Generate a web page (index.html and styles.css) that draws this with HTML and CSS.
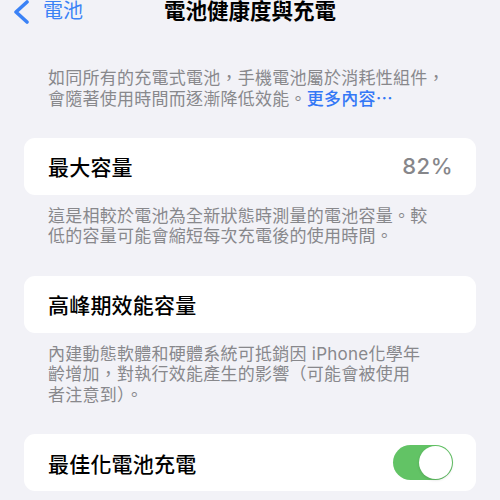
FILE: index.html
```html
<!DOCTYPE html>
<html>
	<head>
		<meta charset="utf-8">
		<title>電池健康度與充電</title>
		<link rel="stylesheet" href="styles.css">
	</head>
	<body>
		<div class="nav">
			<a class="back" href="#">
				<svg width="18" height="24" viewBox="0 0 18 24">
					<polyline points="14,2 3,12 14,22" fill="none" stroke="#3b82f6" stroke-width="3.6" stroke-linecap="round" stroke-linejoin="round"/>
				</svg>
				<span>電池</span>
			</a>
			<h1 class="title">電池健康度與充電</h1>
		</div>

		<p class="note intro">如同所有的充電式電池，手機電池屬於消耗性組件，<br>會隨著使用時間而逐漸降低效能。<a class="more" href="#">更多內容⋯</a></p>

		<div class="group">
			<div class="row">
				<span class="label">最大容量</span>
				<span class="value">82%</span>
			</div>
		</div>
		<p class="note">這是相較於電池為全新狀態時測量的電池容量。較<br>低的容量可能會縮短每次充電後的使用時間。</p>

		<div class="group">
			<div class="row">
				<span class="label">高峰期效能容量</span>
			</div>
		</div>
		<p class="note">內建動態軟體和硬體系統可抵銷因 iPhone化學年<br>齡增加，對執行效能產生的影響（可能會被使用<br>者注意到）。</p>

		<div class="group">
			<div class="row">
				<span class="label">最佳化電池充電</span>
				<span class="switch on"><i></i></span>
			</div>
		</div>
	</body>
</html>
```

FILE: styles.css
```css
*{
	margin: 0;
	padding: 0;
	box-sizing: border-box;
}
body{
	background-color: #f2f2f7;
	font-family: Inter, "Noto Sans CJK TC", sans-serif;
	color: #000;
	overflow: hidden;
}
a{
	text-decoration: none;
}

/* 顶部导航 */
.nav{
	position: relative;
	height: 23px;
	display: flex;
	align-items: flex-start;
	justify-content: center;
}
.back{
	position: absolute;
	left: 13px;
	top: 0;
	display: flex;
	align-items: center;
	gap: 12px;
	color: #3b82f6;
	font-size: 20px;
	line-height: 22px;
}
.back span{
	margin-top: -2px;
}
.title{
	font-size: 21.5px;
	font-weight: 700;
	line-height: 21px;
	padding-top: 1px;
}

/* 说明文字 */
.note{
	padding: 0 24px 0 48px;
	margin: 11px 0 29px;
	font-size: 17px;
	letter-spacing: 0.25px;
	line-height: 20.5px;
	color: #88888c;
}
.note.intro{
	margin-top: 45px;
	margin-bottom: 28.5px;
}
.more{
	color: #3478f6;
	font-weight: 500;
}

/* 分组卡片 */
.group{
	margin: 0 24px;
	background-color: #fff;
	border-radius: 11px;
}
.row{
	height: 57px;
	padding: 0 23px 0 24px;
	display: flex;
	align-items: center;
	justify-content: space-between;
}
.label{
	font-size: 21px;
	font-weight: 500;
	letter-spacing: 0.2px;
}
.value{
	font-size: 22px;
	font-weight: 500;
	color: #86868a;
	letter-spacing: 0.5px;
}

/* 开关 */
.switch{
	position: relative;
	width: 60px;
	height: 35px;
	border-radius: 18px;
	background-color: #e9e9eb;
}
.switch.on{
	background-color: #62c365;
}
.switch i{
	position: absolute;
	top: 1px;
	right: 1px;
	width: 33px;
	height: 33px;
	border-radius: 50%;
	background-color: #fff;
	box-shadow: 0 1px 3px rgba(0,0,0,0.15);
}
```
